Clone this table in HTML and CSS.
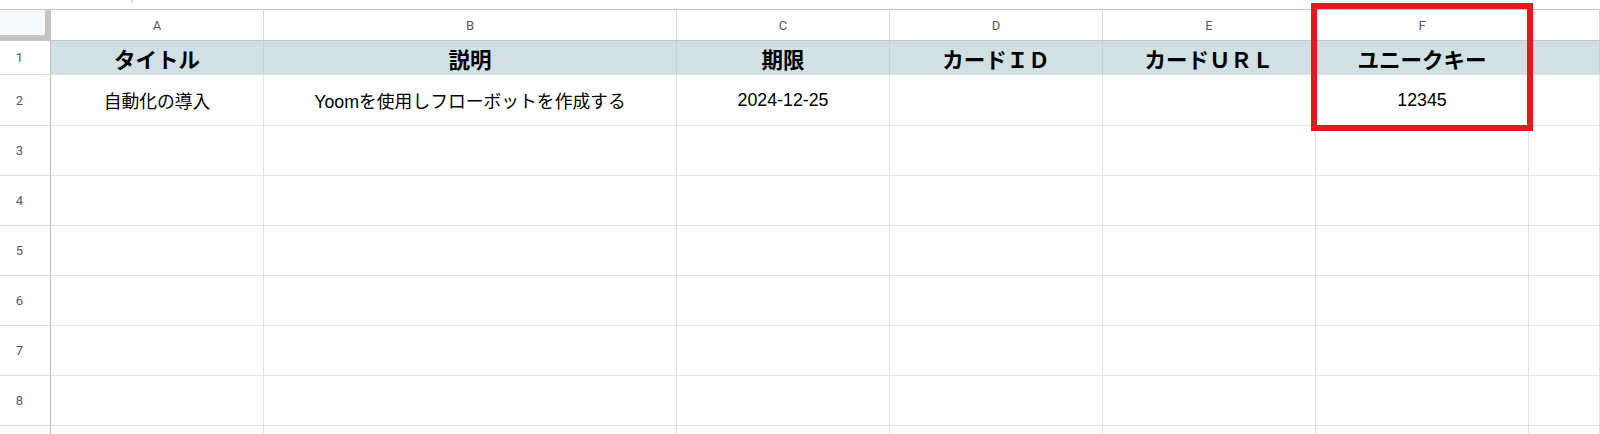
FILE: index.html
```html
<!DOCTYPE html>
<html lang="ja">
<head>
<meta charset="utf-8">
<title>Sheet</title>
<link rel="stylesheet" href="styles.css">
</head>
<body>
<div class="page">
  <span class="tick"></span>
  <div class="sheet">
    <div class="corner"></div>
    <div class="colhead">A</div>
    <div class="colhead">B</div>
    <div class="colhead">C</div>
    <div class="colhead">D</div>
    <div class="colhead">E</div>
    <div class="colhead">F</div>
    <div class="colhead"></div>

    <div class="rowhead">1</div>
    <div class="cell hdr">タイトル</div>
    <div class="cell hdr">説明</div>
    <div class="cell hdr">期限</div>
    <div class="cell hdr">カードＩＤ</div>
    <div class="cell hdr">カードＵＲＬ</div>
    <div class="cell hdr">ユニークキー</div>
    <div class="cell hdr"></div>

    <div class="rowhead">2</div>
    <div class="cell">自動化の導入</div>
    <div class="cell">Yoomを使用しフローボットを作成する</div>
    <div class="cell">2024-12-25</div>
    <div class="cell"></div>
    <div class="cell"></div>
    <div class="cell">12345</div>
    <div class="cell"></div>

    <div class="rowhead">3</div>
    <div class="cell"></div><div class="cell"></div><div class="cell"></div><div class="cell"></div><div class="cell"></div><div class="cell"></div><div class="cell"></div>
    <div class="rowhead">4</div>
    <div class="cell"></div><div class="cell"></div><div class="cell"></div><div class="cell"></div><div class="cell"></div><div class="cell"></div><div class="cell"></div>
    <div class="rowhead">5</div>
    <div class="cell"></div><div class="cell"></div><div class="cell"></div><div class="cell"></div><div class="cell"></div><div class="cell"></div><div class="cell"></div>
    <div class="rowhead">6</div>
    <div class="cell"></div><div class="cell"></div><div class="cell"></div><div class="cell"></div><div class="cell"></div><div class="cell"></div><div class="cell"></div>
    <div class="rowhead">7</div>
    <div class="cell"></div><div class="cell"></div><div class="cell"></div><div class="cell"></div><div class="cell"></div><div class="cell"></div><div class="cell"></div>
    <div class="rowhead">8</div>
    <div class="cell"></div><div class="cell"></div><div class="cell"></div><div class="cell"></div><div class="cell"></div><div class="cell"></div><div class="cell"></div>
    <div class="rowhead"></div>
    <div class="cell"></div><div class="cell"></div><div class="cell"></div><div class="cell"></div><div class="cell"></div><div class="cell"></div><div class="cell"></div>
  </div>
  <div class="highlight"></div>
</div>
</body>
</html>
```

FILE: styles.css
```css
* { box-sizing: border-box; }
html, body {
  margin: 0;
  padding: 0;
  background: #ffffff;
  overflow: hidden;
}
.page {
  position: relative;
  width: 1600px;
  height: 434px;
  padding-top: 9px;
  overflow: hidden;
  font-family: "Liberation Sans", Arial, "Noto Sans CJK JP", sans-serif;
  color: #000000;
}
.tick {
  position: absolute;
  left: 131px;
  top: 0;
  width: 2px;
  height: 3px;
  background: #d6d6d6;
}
.sheet {
  display: grid;
  grid-template-columns: 51px 213px 413px 213px 213px 213px 213px 71px;
  grid-template-rows: 31px 34px 51px repeat(6, 50px) 50px;
  border-top: 1px solid #c4c4c4;
}
.corner {
  background: #f8f9fa;
  border-right: 6px solid #c4c4c4;
  border-bottom: 6px solid #c4c4c4;
  box-shadow: 1px 0 0 #c4c4c4;
}
.colhead {
  display: flex;
  align-items: center;
  justify-content: center;
  font-family: Roboto, "Liberation Sans", sans-serif;
  font-size: 13px;
  color: #555a5f;
  background: #ffffff;
  border-right: 1px solid #d9d9d9;
  border-bottom: 1px solid #c4c4c4;
  padding-top: 1px;
}
.rowhead {
  display: flex;
  align-items: center;
  justify-content: center;
  padding-right: 11px;
  font-family: Roboto, "Liberation Sans", sans-serif;
  font-size: 13px;
  color: #555a5f;
  background: #ffffff;
  border-right: 1px solid #c0c0c0;
  border-bottom: 1px solid #dcdcdc;
}
.cell {
  display: flex;
  align-items: center;
  justify-content: center;
  white-space: nowrap;
  font-size: 17.8px;
  border-right: 1px solid #e2e2e2;
  border-bottom: 1px solid #e2e2e2;
}
.cell.hdr {
  background: #d0e0e3;
  font-weight: bold;
  font-size: 21.5px;
  border-right-color: #c3d1d4;
  border-bottom-color: #dfe3e4;
  padding-top: 1px;
}
.highlight {
  position: absolute;
  left: 1311px;
  top: 3px;
  width: 222px;
  height: 128px;
  border: 6px solid #e5181e;
  pointer-events: none;
}
```
